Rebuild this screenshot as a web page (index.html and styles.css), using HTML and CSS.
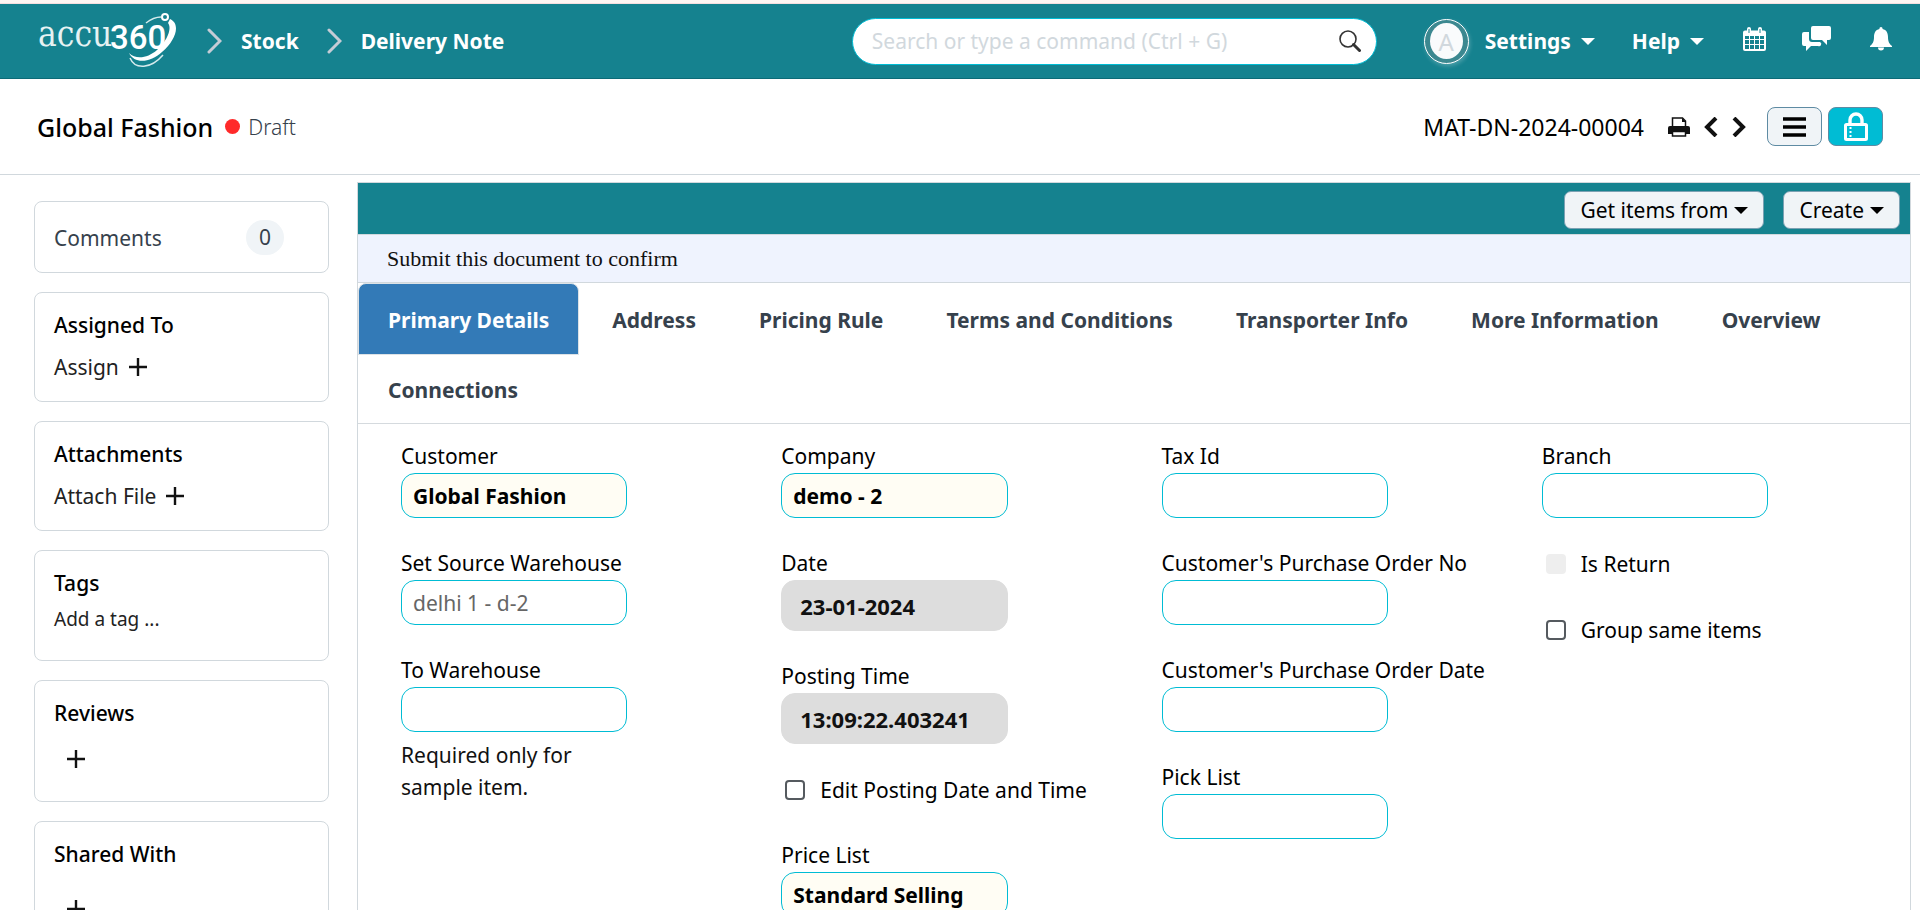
FILE: index.html
```
<!DOCTYPE html>
<html lang="en">
<head>
<meta charset="utf-8">
<meta name="viewport" content="width=device-width, initial-scale=1">
<title>Global Fashion - Delivery Note</title>
<link rel="stylesheet" href="styles.css">
</head>
<body>
<div class="strip"></div>
<header class="navbar">
  <a class="logo" href="#" aria-label="accu360 home">
    <svg width="142" height="58" viewBox="0 0 142 58">
      <text class="logo-serif" x="0" y="34">accu</text>
      <text class="logo-digits" x="72" y="37">360</text>
      <path class="logo-swoosh" d="M132 7C143 12 138 28 124 40 113 50 97 53 91 41c7 7 19 5 28-3 11-10 15-22 11-27z"/>
      <path class="logo-arc" d="M108 11c5-4 9-6 15-6M92 46c5 12 21 11 33-3"/>
      <circle class="logo-ring" cx="127" cy="5" r="3"/>
    </svg>
  </a>
  <nav class="crumbs" aria-label="Breadcrumb">
    <svg width="15" height="26" viewBox="0 0 15 26"><path d="M2 2l11 11L2 24"/></svg>
    <a href="#">Stock</a>
    <svg width="15" height="26" viewBox="0 0 15 26"><path d="M2 2l11 11L2 24"/></svg>
    <a href="#">Delivery Note</a>
  </nav>
  <div class="search">
    <input type="text" aria-label="Search" placeholder="Search or type a command (Ctrl + G)">
    <svg width="22" height="22" viewBox="0 0 22 22"><circle cx="9" cy="9" r="8" fill="none" stroke="#333" stroke-width="1.6"/><path d="M14.500 14.500l6 6" stroke="#333" stroke-width="3" stroke-linecap="round"/></svg>
  </div>
  <div class="nav-right">
    <span class="avatar"><span>A</span></span>
    <button class="nav-menu settings" type="button">Settings <i class="caret"></i></button>
    <button class="nav-menu help" type="button">Help <i class="caret"></i></button>
    <button class="nav-icon calendar" type="button" aria-label="Calendar">
      <svg width="23" height="24" viewBox="0 0 23 24"><path fill="#fff" fill-rule="evenodd" d="M2 3.500h2V2a2 2 0 0 1 4 0v1.500h7V2a2 2 0 0 1 4 0v1.500h2a2 2 0 0 1 2 2V22a2 2 0 0 1-2 2H2a2 2 0 0 1-2-2V5.500a2 2 0 0 1 2-2zM2 9v3h4V9zm5 0v3h4V9zm5 0v3h4V9zm5 0v3h4V9zM2 13v4h4v-4zm5 0v4h4v-4zm5 0v4h4v-4zm5 0v4h4v-4zM2 18v4h4v-4zm5 0v4h4v-4zm5 0v4h4v-4zm5 0v4h4v-4zM5.500 2v4h1V2zm11 0v4h1V2z"/></svg>
    </button>
    <button class="nav-icon chat" type="button" aria-label="Chat">
      <svg width="29" height="26" viewBox="0 0 29 26" fill="#fff"><path d="M11 0h16a2 2 0 0 1 2 2v10a2 2 0 0 1-2 2h-2v5l-5-5h-9a2 2 0 0 1-2-2V2a2 2 0 0 1 2-2z"/><path d="M2 6h5v7a3 3 0 0 0 3 3h8a2 2 0 0 1-2 4H9l-5 5v-5H2a2 2 0 0 1-2-2V8a2 2 0 0 1 2-2z"/></svg>
    </button>
    <button class="nav-icon" type="button" aria-label="Notifications">
      <svg width="22" height="24" viewBox="0 0 22 24" fill="#fff"><path d="M11 0c1 0 1.600.7 1.600 2 3.900.8 5.400 4 5.400 8 0 5 1.500 7 4 9v1H0v-1c2.500-2 4-4 4-9 0-4 1.500-7.200 5.400-8C9.400.7 10 0 11 0zM8 20.500h6a3 3 0 0 1-6 0z"/></svg>
    </button>
  </div>
</header>

<section class="page-head">
  <h1>Global Fashion</h1>
  <span class="status">Draft</span>
  <span class="doc-name">MAT-DN-2024-00004</span>
  <div class="doc-tools">
    <button class="plain print" type="button" aria-label="Print">
      <svg width="22" height="20" viewBox="0 0 22 20"><path d="M4.500 10V1h10l3 3v6" fill="#fff" stroke="#111" stroke-width="1.500"/><path d="M14 1v4h4z" fill="#111"/><path d="M2 9h18a2 2 0 0 1 2 2v6H0v-6a2 2 0 0 1 2-2z" fill="#111"/><path d="M4.500 14.500h13v4.500h-13z" fill="#fff" stroke="#111" stroke-width="1.500"/></svg>
    </button>
    <button class="plain" type="button" aria-label="Previous">
      <svg width="14" height="20" viewBox="0 0 14 20"><path d="M12 1l-9 9 9 9" fill="none" stroke="#111" stroke-width="4"/></svg>
    </button>
    <button class="plain next" type="button" aria-label="Next">
      <svg width="14" height="20" viewBox="0 0 14 20"><path d="M2 1l9 9-9 9" fill="none" stroke="#111" stroke-width="4"/></svg>
    </button>
    <button class="tool" type="button" aria-label="Menu">
      <svg width="23" height="20" viewBox="0 0 23 20"><path d="M0 2h23M0 10h23M0 18h23" stroke="#000" stroke-width="3.600"/></svg>
    </button>
    <button class="tool tool-lock" type="button" aria-label="Save">
      <svg width="24" height="30" viewBox="0 0 24 30" fill="none" stroke="#fff"><path d="M6 12V8a6 6 0 0 1 12 0v4" stroke-width="3.400"/><rect x="1.500" y="12.500" width="21" height="15" rx="1" stroke-width="3"/><path d="M6.500 15v11" stroke-width="2" stroke-dasharray="2 2"/></svg>
    </button>
  </div>
</section>

<div class="layout">
  <aside class="sidebar">
    <section class="card card-row">
      <span class="muted">Comments</span><span class="badge">0</span>
    </section>
    <section class="card">
      <h2>Assigned To</h2>
      <button class="link" type="button">Assign <svg width="18" height="18" viewBox="0 0 18 18"><path d="M9 0v18M0 9h18"/></svg></button>
    </section>
    <section class="card">
      <h2>Attachments</h2>
      <button class="link" type="button">Attach File <svg width="18" height="18" viewBox="0 0 18 18"><path d="M9 0v18M0 9h18"/></svg></button>
    </section>
    <section class="card card-tags">
      <h2>Tags</h2>
      <button class="link small" type="button">Add a tag ...</button>
    </section>
    <section class="card card-reviews">
      <h2>Reviews</h2>
      <button class="link indent" type="button" aria-label="Add review"><svg width="18" height="18" viewBox="0 0 18 18"><path d="M9 0v18M0 9h18"/></svg></button>
    </section>
    <section class="card card-shared">
      <h2>Shared With</h2>
      <button class="link indent" type="button" aria-label="Share"><svg width="18" height="18" viewBox="0 0 18 18"><path d="M9 0v18M0 9h18"/></svg></button>
    </section>
  </aside>

  <main class="form">
    <div class="actions">
      <button type="button">Get items from <i class="caret"></i></button>
      <button type="button">Create <i class="caret"></i></button>
    </div>
    <p class="notice">Submit this document to confirm</p>
    <nav class="tabs">
      <a class="active" href="#">Primary Details</a>
      <a href="#">Address</a>
      <a href="#">Pricing Rule</a>
      <a href="#">Terms and Conditions</a>
      <a href="#">Transporter Info</a>
      <a href="#">More Information</a>
      <a href="#">Overview</a>
      <a href="#">Connections</a>
    </nav>
    <form class="fields">
      <div class="column">
        <div class="field"><label for="customer">Customer</label><input class="required" id="customer" type="text" value="Global Fashion"></div>
        <div class="field"><label for="source">Set Source Warehouse</label><input class="soft" id="source" type="text" value="delhi 1 - d-2"></div>
        <div class="field"><label for="target">To Warehouse</label><input id="target" type="text"><p class="hint">Required only for sample item.</p></div>
      </div>
      <div class="column">
        <div class="field"><label for="company">Company</label><input class="required" id="company" type="text" value="demo - 2"></div>
        <div class="field"><label for="date">Date</label><input class="locked" id="date" type="text" value="23-01-2024" readonly></div>
        <div class="field"><label for="time">Posting Time</label><input class="locked" id="time" type="text" value="13:09:22.403241" readonly></div>
        <div class="check"><input id="edit" type="checkbox"><label for="edit">Edit Posting Date and Time</label></div>
        <div class="field"><label for="price">Price List</label><input class="required" id="price" type="text" value="Standard Selling"></div>
      </div>
      <div class="column">
        <div class="field"><label for="tax">Tax Id</label><input id="tax" type="text"></div>
        <div class="field"><label for="pono">Customer's Purchase Order No</label><input id="pono" type="text"></div>
        <div class="field"><label for="podate">Customer's Purchase Order Date</label><input id="podate" type="text"></div>
        <div class="field"><label for="pick">Pick List</label><input id="pick" type="text"></div>
      </div>
      <div class="column">
        <div class="field"><label for="branch">Branch</label><input id="branch" type="text"></div>
        <div class="check"><input id="return" type="checkbox" disabled><label for="return">Is Return</label></div>
        <div class="check"><input id="group" type="checkbox"><label for="group">Group same items</label></div>
      </div>
    </form>
  </main>
</div>
</body>
</html>
```
FILE: styles.css
```
:root {
  --teal: #15828f;
  --cyan: #00bcd4;
  --line: #d1d8dd;
  --soft: #f0f4f7;
}

* { box-sizing: border-box; }

body {
  margin: 0;
  height: 100vh;
  overflow: hidden;
  display: flex;
  flex-direction: column;
  background: #fff;
  color: #111;
  font: 21px/28px "Noto Sans", "Open Sans", sans-serif;
}

h1, h2, p { margin: 0; }
a { color: inherit; text-decoration: none; }
button, input { font: inherit; color: inherit; }
button { background: none; border: 0; padding: 0; cursor: pointer; white-space: nowrap; }
svg { display: block; flex: none; }

.caret {
  border: 7px solid transparent;
  border-top-color: currentColor;
  border-bottom: 0;
}

/* Top bar */
.strip {
  height: 4px;
  flex: none;
  background: #fdf6f3;
  border-bottom: 1px solid #f5dfe0;
}

.navbar {
  flex: none;
  display: flex;
  align-items: center;
  height: 75px;
  padding: 0 28px 0 38px;
  background: var(--teal);
  border-bottom: 1px solid #0c6b77;
  color: #fff;
  font-weight: 700;
}

.logo-serif { font: 35px "DejaVu Serif Condensed", "DejaVu Serif", serif; fill: #e6f2f3; }
.logo-digits { font: 500 33px Roboto, sans-serif; fill: #fff; }
.logo-swoosh { fill: #fff; }
.logo-arc { fill: none; stroke: #d5eaec; stroke-width: 1.5; }
.logo-ring { fill: var(--teal); stroke: #fff; stroke-width: 2; }

.crumbs { display: flex; align-items: center; margin-left: 27px; }
.crumbs path { fill: none; stroke: #c5ccd6; stroke-width: 3; stroke-linecap: round; }
.crumbs a { margin: 0 28px 0 19px; }

.search {
  display: flex;
  align-items: center;
  width: 525px;
  height: 47px;
  margin-left: auto;
  padding: 0 15px 0 19px;
  background: #fff;
  border: 1px solid var(--cyan);
  border-radius: 24px;
}
.search input { flex: 1; min-width: 0; border: 0; outline: 0; padding: 0; background: none; font-weight: 400; color: #333; }
.search input::placeholder { color: #d1d8dd; opacity: 1; }

.nav-right { display: flex; align-items: center; margin-left: 47px; }
.avatar {
  display: grid;
  place-items: center;
  width: 45px;
  height: 45px;
  border: 1px solid #fff;
  border-radius: 50%;
  background: #3c8890;
  box-shadow: 1px 2px 4px rgba(255, 255, 255, .25);
}
.avatar span {
  width: 33px;
  height: 36px;
  border-radius: 50%;
  background: #fafbfc;
  color: #d1d8dd;
  font: 24px/37px "Noto Sans", sans-serif;
  text-align: center;
}
.nav-menu { display: flex; align-items: center; gap: 10px; font-weight: 700; }
.settings { margin-left: 16px; }
.help { margin-left: 37px; }
.nav-icon { padding-bottom: 4px; }
.calendar { margin-left: 39px; }
.chat { margin: 0 39px 0 36px; }

/* Document heading */
.page-head {
  flex: none;
  display: flex;
  align-items: center;
  height: 96px;
  padding: 0 37px 0 37px;
  border-bottom: 1px solid var(--line);
}
.page-head h1 { font-size: 25px; font-weight: 500; color: #000; }
.status { display: flex; align-items: center; gap: 8px; margin-left: 12px; color: #36414c; font-weight: 300; }
.status::before { content: ""; width: 15px; height: 15px; border-radius: 50%; background: #ff2a2a; }
.doc-name { margin-left: auto; font-size: 23px; color: #000; }
.doc-tools { display: flex; align-items: center; margin-left: 24px; }
.print { margin-right: 14px; }
.next { margin: 0 21px 0 14px; }
.tool {
  display: grid;
  place-items: center;
  width: 55px;
  height: 39px;
  border: 1px solid #5e8ba3;
  border-radius: 8px;
  background: var(--soft);
}
.tool-lock { margin-left: 6px; background: var(--cyan); }

/* Page columns */
.layout {
  flex: 1;
  min-height: 0;
  display: grid;
  grid-template-columns: 295px 1fr;
  gap: 28px;
  padding: 7px 9px 0 34px;
}

.sidebar { display: flex; flex-direction: column; gap: 19px; padding-top: 19px; }
.card {
  flex: none;
  display: flex;
  flex-direction: column;
  align-items: flex-start;
  gap: 14px;
  padding: 18px 19px 20px;
  border: 1px solid var(--line);
  border-radius: 8px;
}
.card h2 { font-size: 21px; font-weight: 500; color: #000; }
.card-row { flex-direction: row; align-items: center; justify-content: space-between; padding: 18px 44px 17px 19px; }
.muted { color: #36414c; }
.badge { width: 38px; border-radius: 18px; background: var(--soft); color: #36414c; line-height: 35px; text-align: center; }
.link { display: flex; align-items: center; gap: 10px; min-height: 28px; color: #222; }
.link path { stroke: #111; stroke-width: 2.4; }
.small { font-size: 19px; }
.indent { margin-left: 13px; }
.card-tags { gap: 8px; padding-bottom: 27px; }
.card-reviews { gap: 18px; padding-bottom: 28px; }
.card-shared { gap: 27px; padding-bottom: 28px; }

/* Form */
.form { border: 1px solid var(--line); border-bottom: 0; min-width: 0; }
.actions {
  display: flex;
  justify-content: flex-end;
  gap: 19px;
  padding: 8px 10px 5px;
  background: var(--teal);
  border-bottom: 1px solid var(--line);
}
.actions button {
  display: flex;
  align-items: center;
  gap: 6px;
  height: 38px;
  padding: 0 15px;
  background: var(--soft);
  border: 1px solid #7ba1b3;
  border-radius: 7px;
  color: #000;
}
.notice {
  padding: 10px 29px 9px;
  background: #eff3fe;
  border-bottom: 1px solid var(--line);
  color: #111;
  font-family: "Liberation Serif", "Times New Roman", serif;
  font-size: 22px;
}
.tabs { display: flex; flex-wrap: wrap; border-bottom: 1px solid #d5dade; }
.tabs a {
  padding: 22px 29px 20px;
  border: 1px solid transparent;
  border-top-left-radius: 8px;
  border-top-right-radius: 8px;
  margin-right: 3px;
  margin-bottom: -2px;
  color: #36414c;
  font-weight: 700;
  line-height: 28px;
}
.tabs .active { background: #337ab7; border-color: #dde2e6; color: #fff; }

.fields { display: grid; grid-template-columns: repeat(4, 1fr); padding: 17px 3px 0 28px; }
.column { padding-left: 15px; min-width: 0; }
.field { width: 62%; margin-bottom: 30px; }
.field label { display: block; padding-bottom: 2px; line-height: 30px; color: #000; white-space: nowrap; }
.field input {
  display: block;
  width: 100%;
  height: 45px;
  padding: 0 11px;
  border: 1px solid var(--cyan);
  border-radius: 14px;
  background: #fff;
}
.field .required { background: #fffdf4; color: #000; font-weight: 700; }
.field .soft { color: #666; }
.field .locked { height: 51px; padding: 0 18px; border-color: #ddd; background: #ddd; font-size: 22px; font-weight: 700; }
.hint { padding-top: 7px; line-height: 32px; }
.check { display: flex; align-items: center; gap: 15px; height: 32px; margin-bottom: 34px; color: #000; white-space: nowrap; }
.check input {
  appearance: none;
  flex: none;
  width: 20px;
  height: 20px;
  margin: 0 0 0 4px;
  border: 2px solid #555a5f;
  border-radius: 4px;
  background: #fff;
}
.check input:disabled { border-color: #eee; background: #eee; }
```
